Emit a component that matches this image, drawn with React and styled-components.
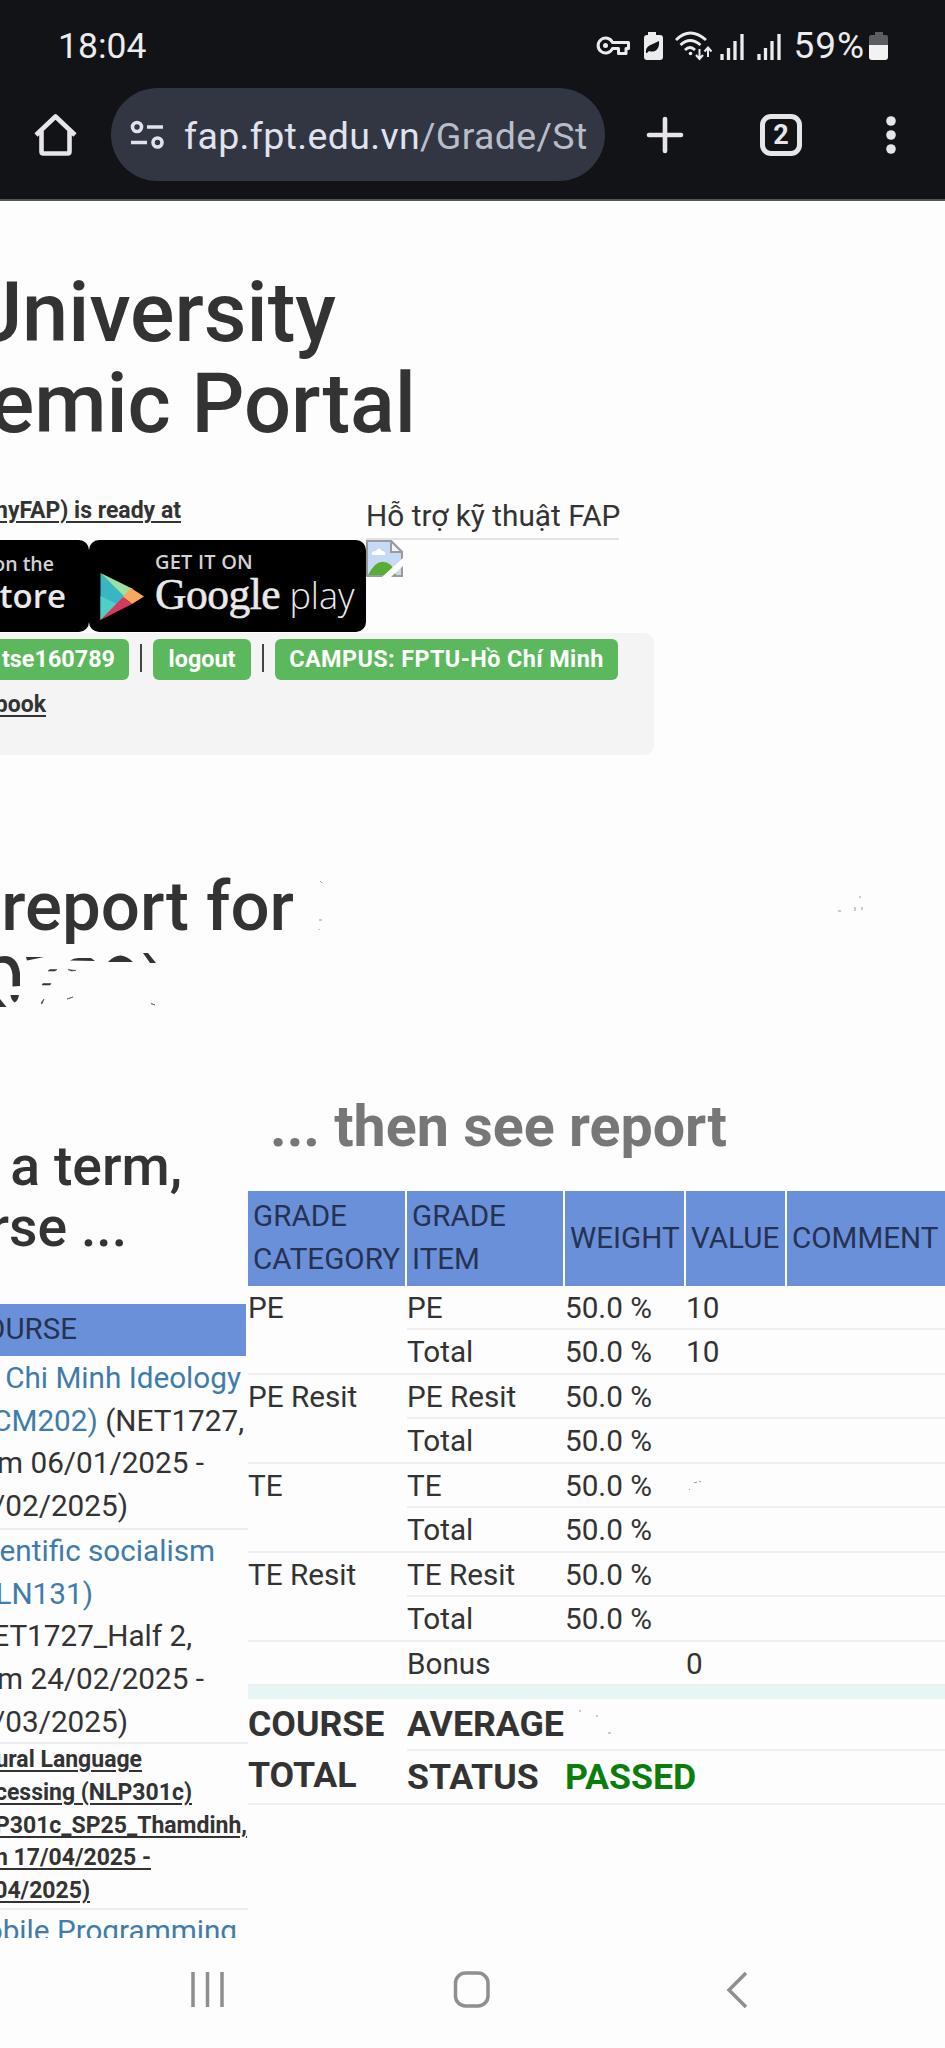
import React from "react";
import styled, { createGlobalStyle, css } from "styled-components";

const Global = createGlobalStyle`
  html, body { margin: 0; padding: 0; background: #fdfdfd; }
  body { font-family: Roboto, "Liberation Sans", sans-serif; color: #333; overflow: hidden; }
  * { box-sizing: border-box; }
`;

const Screen = styled.div`
  width: 945px;
  height: 2048px;
  display: flex;
  flex-direction: column;
  overflow: hidden;
  background: #fdfdfd;
`;

const Chrome = styled.header`
  height: 201px;
  flex: none;
  background: #121317;
  border-bottom: 2px solid #55565a;
`;

const StatusBar = styled.div`
  height: 88px;
  padding: 4px 56px 0 58px;
  display: flex;
  align-items: center;
  color: #ececee;
`;

const StatusText = styled.span`
  font-size: ${(p) => p.$size || 35}px;
  line-height: 40px;
  letter-spacing: ${(p) => p.$track || 0}px;
  margin-right: ${(p) => (p.$push ? "auto" : "4px")};
`;

const StatusIcons = styled.svg`
  display: block;
  flex: none;
  margin-right: 12px;
`;

const Toolbar = styled.div`
  height: 93px;
  display: flex;
  align-items: center;
  color: #e6e6ea;
`;

const ToolIcon = styled.svg`
  display: block;
  flex: none;
  margin-left: ${(p) => p.$gap}px;
`;

const UrlPill = styled.div`
  width: 494px;
  height: 93px;
  margin-left: 33px;
  padding-left: 19px;
  border-radius: 47px;
  background: #313642;
  display: flex;
  align-items: center;
`;

const Url = styled.span`
  margin-left: 19px;
  padding-top: 2px;
  font-size: 37.5px;
  line-height: 46px;
  white-space: nowrap;
  color: #e0e3ee;
  letter-spacing: 0.35px;
  span { color: #b9bdca; }
`;

const TabCount = styled.div`
  width: 42px;
  height: 42px;
  margin-left: 75px;
  border: 5px solid #e6e6ea;
  border-radius: 11px;
  display: flex;
  align-items: center;
  justify-content: center;
  font-size: 27px;
  font-weight: 700;
  line-height: 30px;
`;

const Page = styled.main`
  height: 1737px;
  flex: none;
  overflow: hidden;
`;

/* A line of the sideways-scrolled page: its end stays on screen, its start runs off the left edge. */
const Line = styled.div`
  width: ${(p) => p.$end}px;
  flex: none;
  display: flex;
  justify-content: flex-end;
  white-space: pre;
`;

const Title = styled.h1`
  margin: 0;
  padding-top: 66px;
  height: 247px;
  font-size: 83px;
  line-height: 91.3px;
  font-weight: 500;
`;

const Apps = styled.section`
  display: flex;
  height: 185px;
`;

const Stores = styled.div`
  width: 366px;
`;

const Strong = styled.div`
  font-size: 23px;
  line-height: 32.8px;
  font-weight: 700;
  text-decoration: underline;
  text-decoration-thickness: 2px;
  text-underline-offset: 3px;
`;

const Ready = styled(Strong)`
  padding-top: 47px;
  height: 92px;
`;

const Badges = styled.div`
  display: flex;
  height: 92px;
`;

const Badge = styled.div`
  width: ${(p) => p.$w}px;
  height: 92px;
  padding-top: ${(p) => p.$top || 0}px;
  background: #000;
  border-radius: ${(p) => p.$radius};
  color: #e9e9e9;
  display: flex;
  flex-direction: ${(p) => (p.$row ? "row" : "column")};
`;

const BadgeSmall = styled.div`
  font: 600 ${(p) => p.$size || 19.5}px/24px "Open Sans", sans-serif;
  color: #d2d2d2;
  letter-spacing: ${(p) => p.$track || 0}px;
  white-space: nowrap;
`;

const BadgeBig = styled.div`
  font: ${(p) => p.$weight || 500} ${(p) => p.$size}px/40px "Open Sans", sans-serif;
  white-space: nowrap;
`;

const GoogleWord = styled.span`
  font-family: "Liberation Serif", serif;
  font-size: 43.5px;
  letter-spacing: -0.5px;
  -webkit-text-stroke: 0.6px #e9e9e9;
`;

const PlayText = styled.div`
  padding: 10px 0 0 6px;
`;

const Support = styled.div`
  width: 253px;
`;

const SupportTitle = styled.div`
  height: 92px;
  padding-top: 47px;
  font-size: 29.8px;
  line-height: 42px;
  white-space: nowrap;
  border-bottom: 2px solid #e3e3e3;
`;

const Account = styled.section`
  width: 654px;
  height: 122px;
  padding-top: 6px;
  background: #f4f4f4;
  border-radius: 0 9px 9px 0;
`;

const Labels = styled.div`
  display: flex;
  height: 41px;
  align-items: center;
`;

const Label = styled.span`
  width: ${(p) => p.$w}px;
  height: 41px;
  padding: 1px 14px 0 ${(p) => (p.$open ? 0 : 14)}px;
  border-radius: ${(p) => (p.$open ? "0 6px 6px 0" : "6px")};
  background: #5cb85c;
  color: #fff;
  display: flex;
  justify-content: ${(p) => (p.$open ? "flex-end" : "center")};
  font-size: 23.4px;
  line-height: 38px;
  font-weight: 700;
  letter-spacing: ${(p) => p.$track || 0}px;
  white-space: nowrap;
`;

const Bar = styled.i`
  width: 2px;
  height: 28px;
  margin: -3px 11px 0;
  background: #444;
`;

const Notebook = styled(Strong)`
  padding-top: 9px;
`;

const Report = styled.h2`
  margin: 0;
  height: 314px;
  padding-top: 114px;
  font-size: 69px;
  line-height: 76px;
  font-weight: 500;
  svg { display: block; }
`;

const ReportLine = styled.div`
  display: flex;
  height: 76px;
`;

const Columns = styled.div`
  display: flex;
  height: 868px;
`;

const Courses = styled.div`
  width: 246px;
  flex: none;
`;

const Step = styled.h3`
  margin: 0;
  height: 235px;
  padding-top: 68px;
  font-size: 55.3px;
  line-height: 60.5px;
  font-weight: 500;
`;

const HeadFill = css`
  background: #6b90da;
  color: #263252;
`;

const CourseHead = styled.div`
  ${HeadFill}
  height: 52px;
  line-height: 50px;
  font-size: 29.5px;
`;

const Course = styled.div`
  width: 248px;
  padding-top: ${(p) => p.$top || 0}px;
  font-size: 29.7px;
  line-height: 42.7px;
  height: ${(p) => p.$h}px;
  border-bottom: 2px solid #ededed;
`;

const Link = styled.span`
  color: #3f7cac;
`;

const Grades = styled.div`
  width: 697px;
  margin-left: 2px;
  flex: none;
`;

const Then = styled.h3`
  margin: 0;
  height: 122px;
  padding: 28px 0 0 22px;
  font-size: 57.4px;
  line-height: 60px;
  font-weight: 700;
  color: #777;
`;

const HeadRow = styled.div`
  display: grid;
  grid-template-columns: 157px 156px 119px 99px 158px;
  column-gap: 2px;
  height: 95px;
`;

const Th = styled.div`
  ${HeadFill}
  display: flex;
  align-items: center;
  padding: 0 0 1px 5px;
  font-size: 29.6px;
  line-height: 43px;
`;

const Grid = styled.div`
  display: grid;
  grid-template-columns: 159px 158px 121px 101px 158px;
  grid-auto-rows: 44.45px;
  font-size: 29.7px;
  line-height: 43px;
`;

const Cell = styled.div`
  grid-row: span ${(p) => p.$rows || 1};
  border-bottom: 2px solid #efefef;
  padding-top: ${(p) => p.$top || 0}px;
  white-space: nowrap;
  overflow: hidden;
  svg { display: block; }
`;

const Band = styled.div`
  height: 13px;
  background: #e8f5f5;
`;

const Totals = styled.div`
  display: grid;
  grid-template-columns: 159px 158px 380px;
  grid-template-rows: 52px 54px;
  font-size: 35.7px;
  line-height: 51px;
  font-weight: 700;
`;

const Passed = styled.span`
  color: #0a7d0c;
`;

const NavBar = styled.nav`
  flex: 1;
  display: flex;
  align-items: center;
  svg { display: block; }
`;

const erased = <Specks width={60} height={40} d="M8 19l3-1M3 26l1-1M13 17l2 1" />;

const items = [
  ["PE", ["PE", "50.0 %", "10"], ["Total", "50.0 %", "10"]],
  ["PE Resit", ["PE Resit", "50.0 %", ""], ["Total", "50.0 %", ""]],
  ["TE", ["TE", "50.0 %", erased], ["Total", "50.0 %", ""]],
  ["TE Resit", ["TE Resit", "50.0 %", ""], ["Total", "50.0 %", ""]],
];

function Specks({ width, height, d }) {
  return (
    <svg width={width} height={height} viewBox={`0 0 ${width} ${height}`} fill="none" stroke="#999" strokeWidth="1">
      <path d={d} />
    </svg>
  );
}

function StatusGlyphs() {
  return (
    <StatusIcons width="186" height="30" viewBox="0 0 186 30" fill="none" stroke="#ececee">
      <path d="M16.500 11.500H32.500V17.500H30V22.500H22.500V17.500H16.500A7.500 7.500 0 1 1 16.500 11.500Z" strokeWidth="3" strokeLinejoin="round" />
      <circle cx="9.5" cy="14.5" r="2.5" fill="#ececee" stroke="none" />
      <path d="M52 1h8v3h4q3 0 3 3v19q0 3-3 3H51q-3 0-3-3V7q0-3 3-3h1Z" fill="#ececee" stroke="none" />
      <path d="M50 22C49 14 56 14 63 10C64 19 58 22 53 20L51 22Z" fill="#121317" stroke="none" />
      <path d="M80 9Q94-5 110 9M84.500 14Q94 5 104.500 14M89 19Q94 14 99 19" strokeWidth="2.800" />
      <circle cx="94.500" cy="22.500" r="1.800" fill="#ececee" stroke="none" />
      <path d="M103.500 18v9M100 24l3.500 4 3.500-4M112 26v-9M108.500 20.500l3.500-4 3.500 4" strokeWidth="2" />
      <path d="M126 23v6M132.500 17v12M139 10v19M146 3v26M163 23v6M169.500 17v12M176 10v19M183 3v26" strokeWidth="3.300" />
    </StatusIcons>
  );
}

function BrokenImage() {
  return (
    <svg width="37" height="37" viewBox="0 0 37 37">
      <path d="M1 1H25L36 12V36H1Z" fill="#c7daf5" stroke="#9b9b9b" strokeWidth="2" />
      <path d="M6 15q-1-4 4-4 3-5 6 0 4 0 3 4Z" fill="#fff" />
      <path d="M2 35Q12 15 25 25L30 35Z" fill="#58ad35" />
      <path d="M25 1V12H36Z" fill="#f3f3f3" stroke="#9b9b9b" strokeWidth="2" />
      <path d="M16 37L37 18V26L25 37Z" fill="#fff" />
    </svg>
  );
}

/* What is left of the second heading line after it was rubbed out. */
function Remnants() {
  return (
    <svg width="200" height="76" viewBox="0 0 200 76" fill="#333">
      <path d="M0 11.500Q17 8 20 28V41L12.500 41.500V30Q11 16 0 18Z" />
      <path d="M10.500 50H19Q18 56 14.500 57.500Q11 55 10.500 50ZM0 54L6.500 62H0Z" />
      <path d="M26 12H44L27 15.500ZM70 15.500Q74 12.500 80 13H91L95 16ZM108 17Q120 4 133 17ZM143 8H148L156 18H150Z" />
      <path d="M50 24.500H57L55 26H48ZM68 24.500L76 25.500L71 26ZM43 38.500H51L50 40H42ZM44 54L42 59L41 58ZM67 54L73 52ZM151 58.500L155 60Z" stroke="#444" strokeWidth="0.600" />
    </svg>
  );
}

function PlayLogo() {
  return (
    <svg width="60" height="92" viewBox="0 0 60 92">
      <path d="M11.500 33V80L37 56Z" fill="#38b6c4" />
      <path d="M11.500 56V80L28 64Z" fill="#4fd0c4" />
      <path d="M11.500 33L44 49L36 57Z" fill="#9be0a4" />
      <path d="M42 48L55 56.500L43 64L34 57Z" fill="#f8a95c" />
      <path d="M11.500 80L34 57L43 64Z" fill="#d63a5e" />
    </svg>
  );
}

export default function App() {
  return (
    <Screen>
      <Global />
      <Chrome>
        <StatusBar>
          <StatusText $push $size={35.5}>18:04</StatusText>
          <StatusGlyphs />
          <StatusText $size={37} $track={0.9}>59%</StatusText>
          <svg width="20" height="28" viewBox="0 0 20 28">
            <path d="M6 0h8v3h3q2 0 2 2v9H0V5q0-2 2-2h4Z" fill="#5c5d61" />
            <path d="M0 13H19V25q0 3-3 3H3q-3 0-3-3Z" fill="#f2f2f2" />
          </svg>
        </StatusBar>
        <Toolbar>
          <ToolIcon $gap={34} width="44" height="44" viewBox="0 0 44 44" fill="none" stroke="#e6e6ea" strokeWidth="4.600">
            <path d="M2 22L21.500 3.500L41 22M7.500 18V38.500Q7.500 40.500 9.500 40.500H33.500Q35.500 40.500 35.500 38.500V18" strokeLinejoin="round" />
          </ToolIcon>
          <UrlPill>
            <svg width="35" height="30" viewBox="0 0 35 30" fill="none" stroke="#e0e3ee" strokeWidth="3.600">
              <circle cx="7" cy="7" r="4.500" />
              <circle cx="27.500" cy="22.500" r="4.500" />
              <path d="M17 7H33M1 22.500H17" />
            </svg>
            <Url>fap.fpt.edu.vn<span>/Grade/St</span></Url>
          </UrlPill>
          <ToolIcon $gap={40} width="40" height="40" viewBox="0 0 40 40" stroke="#e6e6ea" strokeWidth="4.600" strokeLinecap="round">
            <path d="M20 4V36M4 20H36" />
          </ToolIcon>
          <TabCount>2</TabCount>
          <ToolIcon $gap={83} width="12" height="40" viewBox="0 0 12 40" fill="#e6e6ea">
            <circle cx="6" cy="6" r="4.800" />
            <circle cx="6" cy="20" r="4.800" />
            <circle cx="6" cy="34" r="4.800" />
          </ToolIcon>
        </Toolbar>
      </Chrome>

      <Page>
        <Title>
          <Line $end={336}>University</Line>
          <Line $end={416}>emic Portal</Line>
        </Title>

        <Apps>
          <Stores>
            <Ready><Line $end={181}>myFAP) is ready at</Line></Ready>
            <Badges>
              <Badge $w={89} $radius="0 10px 10px 0" $top={12}>
                <Line $end={54}><BadgeSmall>on the</BadgeSmall></Line>
                <Line $end={66}><BadgeBig $size={33} $weight={600}>tore</BadgeBig></Line>
              </Badge>
              <Badge $w={277} $radius="10px" $row>
                <PlayLogo />
                <PlayText>
                  <BadgeSmall $size={20} $track={0.2}>GET IT ON</BadgeSmall>
                  <BadgeBig $size={36} $weight={300}><GoogleWord>Google</GoogleWord> play</BadgeBig>
                </PlayText>
              </Badge>
            </Badges>
          </Stores>
          <Support>
            <SupportTitle>Hỗ trợ kỹ thuật FAP</SupportTitle>
            <BrokenImage />
          </Support>
        </Apps>

        <Account>
          <Labels>
            <Label $w={129} $open>tse160789</Label>
            <Bar />
            <Label $w={98}>logout</Label>
            <Bar />
            <Label $w={343} $track={0.4}>CAMPUS: FPTU-Hồ Chí Minh</Label>
          </Labels>
          <Notebook><Line $end={46}>book</Line></Notebook>
        </Account>

        <Report>
          <ReportLine>
            <Line $end={294}>report for</Line>
            <Specks width={651} height={76} d="M26 12l2 2M25 51h3M25 60v1M544 42h3M565 28h2M561 38v4M568 38v3" />
          </ReportLine>
          <Remnants />
        </Report>

        <Columns>
          <Courses>
            <Step>
              <Line $end={182}>a term,</Line>
              <Line $end={127}>rse ...</Line>
            </Step>
            <CourseHead><Line $end={77}>OURSE</Line></CourseHead>
            <Course $h={174} $top={1}>
              <Line $end={241}><Link>Chi Minh Ideology</Link></Line>
              <Line $end={244}><Link>CM202)</Link> (NET1727,</Line>
              <Line $end={204}>m 06/01/2025 -</Line>
              <Line $end={128}>/02/2025)</Line>
            </Course>
            <Course $h={214}>
              <Line $end={215}><Link>entific socialism</Link></Line>
              <Line $end={93}><Link>LN131)</Link></Line>
              <Line $end={192}>ET1727_Half 2,</Line>
              <Line $end={204}>m 24/02/2025 -</Line>
              <Line $end={128}>/03/2025)</Line>
            </Course>
            <Course $h={166}>
              <Strong>
                <Line $end={142}>ural Language</Line>
                <Line $end={192}>cessing (NLP301c)</Line>
                <Line $end={247}>P301c_SP25_Thamdinh,</Line>
                <Line $end={151}>m 17/04/2025 -</Line>
                <Line $end={90}>04/2025)</Line>
              </Strong>
            </Course>
            <Course $h={60}>
              <Line $end={237}><Link>obile Programming</Link></Line>
            </Course>
          </Courses>

          <Grades>
            <Then>... then see report</Then>
            <HeadRow>
              <Th>GRADE<br />CATEGORY</Th>
              <Th>GRADE<br />ITEM</Th>
              <Th>WEIGHT</Th>
              <Th>VALUE</Th>
              <Th>COMMENT</Th>
            </HeadRow>
            <Grid>
              {items.map(([category, ...rows]) => (
                <React.Fragment key={category}>
                  <Cell $rows={2}>{category}</Cell>
                  {rows.map((r) => (
                    <React.Fragment key={r[0]}>
                      <Cell>{r[0]}</Cell>
                      <Cell>{r[1]}</Cell>
                      <Cell>{r[2]}</Cell>
                      <Cell />
                    </React.Fragment>
                  ))}
                </React.Fragment>
              ))}
              <Cell />
              <Cell>Bonus</Cell>
              <Cell />
              <Cell>0</Cell>
              <Cell />
            </Grid>
            <Band />
            <Totals>
              <Cell $rows={2}>COURSE<br />TOTAL</Cell>
              <Cell>AVERAGE</Cell>
              <Cell><Specks width={60} height={44} d="M14 12h2M32 16v2M43 34h3" /></Cell>
              <Cell $top={1}>STATUS</Cell>
              <Cell $top={1}><Passed>PASSED</Passed></Cell>
            </Totals>
          </Grades>
        </Columns>
      </Page>

      <NavBar>
        <svg width="945" height="110" viewBox="0 0 945 110" fill="none" stroke="#8f8f8f" strokeWidth="3.500">
          <path d="M193 34V69M207.500 34V69M222 34V69" />
          <rect x="455.500" y="35" width="32.500" height="33" rx="10" />
          <path d="M746 35L729 52L746 69" />
        </svg>
      </NavBar>
    </Screen>
  );
}
